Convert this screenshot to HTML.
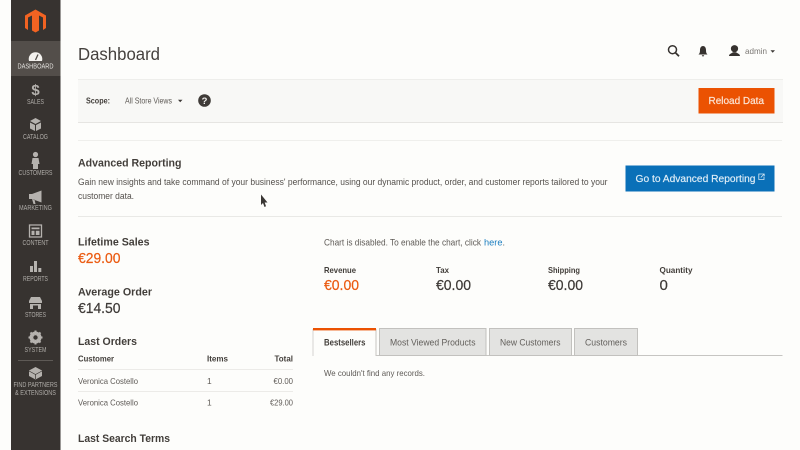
<!DOCTYPE html>
<html><head><meta charset="utf-8"><title>Dashboard</title>
<style>
html,body{margin:0;padding:0;width:800px;height:450px;overflow:hidden;background:#fdfdfb}
svg{display:block;filter:blur(.3px)}
text{font-family:"Liberation Sans",sans-serif;fill:#514d49}
.b{font-weight:bold;fill:#423e3a}
.n{font-size:7.300px;fill:#aeaba7;text-anchor:middle}
.i{fill:#b5b2ae}
.p{fill:#55514d}
.t{fill:#5f5b57}
.k{fill:#3d3936;stroke:#3d3936;stroke-width:.2}
.o{fill:#eb5a10;stroke:#eb5a10;stroke-width:.2}
</style></head><body>
<svg width="800" height="450" viewBox="0 0 800 450" xmlns="http://www.w3.org/2000/svg">
<rect width="800" height="450" fill="#fdfdfb"/>
<!-- sidebar -->
<rect x="11" width="49.500" height="450" fill="#373330"/>
<rect x="11" y="41" width="49.500" height="35" fill="#534e4a"/>
<path d="M35.500 9.500 L46 15.500 V28 L43 30 V17.500 L39 15.500 V30.500 L35.500 32.500 L32 30.500 V15.500 L28 17.500 V30 L25 28 V15.500 Z" fill="#f26322"/>
<!-- dashboard icon -->
<path d="M29 61 a6.800 6.800 0 1 1 13 0 Z" fill="#f4f2ef"/><path d="M35.500 60 L38 54.500" stroke="#534e4a" stroke-width="1.300"/>
<text class="n" x="35.500" y="68.500" style="fill:#e6e4e1" textLength="36" lengthAdjust="spacingAndGlyphs">DASHBOARD</text>
<text x="35.500" y="95" text-anchor="middle" font-size="15" font-weight="bold" style="fill:#b5b2ae">$</text>
<text class="n" x="35.500" y="104" textLength="17" lengthAdjust="spacingAndGlyphs">SALES</text>
<path d="M35.500 118 L41 121 L35.500 124 L30 121 Z M30 122.500 L35 125 V131 L30 128.500 Z M41 122.500 L36 125 V131 L41 128.500 Z" class="i"/>
<text class="n" x="35.500" y="139" textLength="25" lengthAdjust="spacingAndGlyphs">CATALOG</text>
<circle cx="35.500" cy="154.500" r="2.600" class="i"/><path d="M32.500 158 H38.500 L39.500 164 H38 V169 H33 V164 H31.500 Z" class="i"/>
<text class="n" x="35.500" y="175" textLength="34" lengthAdjust="spacingAndGlyphs">CUSTOMERS</text>
<path d="M29 194 H32 L41.500 190.500 V202.500 L32 199 H29 Z M32 199 L33.500 204 H35.500 L34.500 199.500 Z" class="i"/>
<text class="n" x="35.500" y="210" textLength="33" lengthAdjust="spacingAndGlyphs">MARKETING</text>
<path d="M29.500 225 H41.500 V237 H29.500 Z" fill="none" stroke="#b5b2ae" stroke-width="1.300"/><path d="M31.500 227.500 H39.500 V229.300 H31.500 Z M31.500 230.800 H34.500 V235 H31.500 Z M35.800 230.800 H39.500 V235 H35.800 Z" class="i"/>
<text class="n" x="35.500" y="245" textLength="26" lengthAdjust="spacingAndGlyphs">CONTENT</text>
<path d="M30 266 H33 V272 H30 Z M34 261 H37 V272 H34 Z M38.300 268 H41.300 V272 H38.300 Z" class="i"/>
<text class="n" x="35.500" y="281" textLength="25" lengthAdjust="spacingAndGlyphs">REPORTS</text>
<path d="M29 301 L31 297 H40 L42 301 V303 H29 Z M30 304 H41 V309 H38 V305.500 H33 V309 H30 Z" class="i"/>
<text class="n" x="35.500" y="317" textLength="21" lengthAdjust="spacingAndGlyphs">STORES</text>
<circle cx="35.500" cy="337.500" r="4.500" fill="none" stroke="#b5b2ae" stroke-width="3"/><path d="M35.500 330.500 V344.500 M28.500 337.500 H42.500 M30.500 332.500 L40.500 342.500 M40.500 332.500 L30.500 342.500" stroke="#b5b2ae" stroke-width="2"/><circle cx="35.500" cy="337.500" r="2.200" fill="#373330"/>
<text class="n" x="35.500" y="352" textLength="22" lengthAdjust="spacingAndGlyphs">SYSTEM</text>
<rect x="18" y="360" width="35" height="1" fill="#5e5a56"/>
<path d="M35.500 367 L42 370.500 V376 L35.500 379.500 L29 376 V370.500 Z" class="i"/><path d="M29 371 L35.500 374.500 L42 371 M35.500 374.500 V379" stroke="#373330" stroke-width=".7" fill="none"/>
<text class="n" x="35.500" y="387" textLength="44" lengthAdjust="spacingAndGlyphs">FIND PARTNERS</text>
<text class="n" x="35.500" y="395" textLength="41" lengthAdjust="spacingAndGlyphs">&amp; EXTENSIONS</text>

<!-- header -->
<text x="78" y="60" font-size="17.500" style="fill:#45413e" textLength="82" lengthAdjust="spacingAndGlyphs">Dashboard</text>
<circle cx="672.500" cy="49.700" r="4" fill="none" stroke="#36322f" stroke-width="1.500"/><path d="M675.500 52.800 L679 56.300" stroke="#36322f" stroke-width="1.800"/>
<path d="M698.500 54.500 c1.300 -1 1.500 -2.500 1.500 -4.500 c0 -2.400 1.300 -4 3 -4 s3 1.600 3 4 c0 2 .2 3.500 1.500 4.500 Z M701.800 55.300 h2.400 a1.200 1.200 0 0 1 -2.400 0 Z" fill="#36322f"/>
<circle cx="734.500" cy="48.700" r="3.600" fill="#36322f"/><path d="M729 56 c0 -2.300 2.700 -2.700 4 -3.800 h3 c1.300 1.100 4 1.500 4 3.800 Z" fill="#36322f"/>
<text x="745" y="54" font-size="8.200" style="fill:#7b7874" textLength="22" lengthAdjust="spacingAndGlyphs">admin</text>
<path d="M770.500 50.300 H775 L772.700 52.800 Z" fill="#3c3835"/>

<!-- scope bar -->
<rect x="78" y="79" width="705" height="44" fill="#f8f8f6"/>
<rect x="78" y="79" width="705" height="1" fill="#eeeeeb"/>
<rect x="78" y="122" width="705" height="1" fill="#e6e5e2"/>
<text x="86" y="103.500" font-size="8.200" class="b" textLength="24" lengthAdjust="spacingAndGlyphs">Scope:</text>
<text x="125" y="103.500" font-size="8.200" class="t" textLength="47" lengthAdjust="spacingAndGlyphs">All Store Views</text>
<path d="M178 99.800 H182.500 L180.200 102.300 Z" fill="#3c3835"/>
<circle cx="204.500" cy="100.500" r="6.300" fill="#3f3b38"/>
<text x="204.500" y="104" font-size="9.500" font-weight="bold" text-anchor="middle" style="fill:#f5f4f2">?</text>
<rect x="698.500" y="88" width="76" height="25.500" fill="#eb5202"/>
<text x="708.500" y="104" font-size="10" style="fill:#fbe4d4;stroke:#fbe4d4;stroke-width:.2" textLength="55.500" lengthAdjust="spacingAndGlyphs">Reload Data</text>

<!-- advanced reporting -->
<rect x="78" y="140" width="704" height="1" fill="#efefec"/>
<text x="78" y="166.500" font-size="11.300" class="b" textLength="103.500" lengthAdjust="spacingAndGlyphs">Advanced Reporting</text>
<text x="78" y="185" font-size="8.900" class="p" textLength="529.500" lengthAdjust="spacingAndGlyphs">Gain new insights and take command of your business' performance, using our dynamic product, order, and customer reports tailored to your</text>
<text x="78" y="199" font-size="8.900" class="p" textLength="56" lengthAdjust="spacingAndGlyphs">customer data.</text>
<rect x="625.500" y="165.500" width="149" height="26" fill="#0a70b8"/>
<text x="635.500" y="182" font-size="10" style="fill:#e0eef7;stroke:#e0eef7;stroke-width:.15" textLength="120" lengthAdjust="spacingAndGlyphs">Go to Advanced Reporting</text>
<path d="M762 174 H758.800 V179.500 H764 V176.500 M760.800 177.500 L764.200 174 M762 174 H764.200 V176" fill="none" stroke="#d8e9f4" stroke-width=".8"/>
<rect x="78" y="216" width="704" height="1" fill="#e9e9e6"/>
<!-- cursor -->
<path d="M261 194.500 V205 L263 203 L264.500 207 L266 206.300 L264.700 202.500 H267.500 Z" fill="#3a3734"/>

<!-- left stats -->
<text x="78" y="245.500" font-size="10.800" class="b" textLength="71.500" lengthAdjust="spacingAndGlyphs">Lifetime Sales</text>
<text x="78" y="263" font-size="15" class="o" textLength="42.500" lengthAdjust="spacingAndGlyphs">€29.00</text>
<text x="78" y="295.500" font-size="10.800" class="b" textLength="74" lengthAdjust="spacingAndGlyphs">Average Order</text>
<text x="78" y="313" font-size="15" class="k" textLength="42.500" lengthAdjust="spacingAndGlyphs">€14.50</text>

<text x="78" y="345" font-size="11.300" class="b" textLength="59" lengthAdjust="spacingAndGlyphs">Last Orders</text>
<text x="78" y="361.500" font-size="8.200" class="b" textLength="36" lengthAdjust="spacingAndGlyphs">Customer</text>
<text x="207" y="361.500" font-size="8.200" class="b" textLength="21" lengthAdjust="spacingAndGlyphs">Items</text>
<text x="274.500" y="361.500" font-size="8.200" class="b" textLength="18.500" lengthAdjust="spacingAndGlyphs">Total</text>
<rect x="78" y="369" width="215" height="1" fill="#ecebe8"/>
<text x="78" y="384" font-size="8.400" class="t" textLength="60" lengthAdjust="spacingAndGlyphs">Veronica Costello</text>
<text x="207" y="384" font-size="8.400" class="t">1</text>
<text x="273.500" y="384" font-size="8.400" class="t" textLength="19.500" lengthAdjust="spacingAndGlyphs">€0.00</text>
<rect x="78" y="391" width="215" height="1" fill="#ecebe8"/>
<text x="78" y="405.500" font-size="8.400" class="t" textLength="60" lengthAdjust="spacingAndGlyphs">Veronica Costello</text>
<text x="207" y="405.500" font-size="8.400" class="t">1</text>
<text x="270" y="405.500" font-size="8.400" class="t" textLength="23" lengthAdjust="spacingAndGlyphs">€29.00</text>
<text x="78" y="442" font-size="11.300" class="b" textLength="92" lengthAdjust="spacingAndGlyphs">Last Search Terms</text>

<!-- right stats -->
<text x="324" y="245.500" font-size="8.900" class="t" textLength="157" lengthAdjust="spacingAndGlyphs">Chart is disabled. To enable the chart, click</text>
<text x="484" y="245.500" font-size="8.900" style="fill:#1d7fc1" textLength="18.500" lengthAdjust="spacingAndGlyphs">here</text>
<text x="502.500" y="245.500" font-size="8.900" class="t">.</text>
<text x="324" y="273" font-size="8.200" class="b" textLength="32" lengthAdjust="spacingAndGlyphs">Revenue</text>
<text x="436" y="273" font-size="8.200" class="b" textLength="13" lengthAdjust="spacingAndGlyphs">Tax</text>
<text x="548" y="273" font-size="8.200" class="b" textLength="32" lengthAdjust="spacingAndGlyphs">Shipping</text>
<text x="659.500" y="273" font-size="8.200" class="b" textLength="33" lengthAdjust="spacingAndGlyphs">Quantity</text>
<text x="324" y="290" font-size="15" class="o" textLength="35" lengthAdjust="spacingAndGlyphs">€0.00</text>
<text x="436" y="290" font-size="15" class="k" textLength="35" lengthAdjust="spacingAndGlyphs">€0.00</text>
<text x="548" y="290" font-size="15" class="k" textLength="35" lengthAdjust="spacingAndGlyphs">€0.00</text>
<text x="659.500" y="290" font-size="15" class="k">0</text>

<!-- tabs -->
<rect x="312.500" y="355" width="470" height="1" fill="#c6c5c2"/>
<rect x="312.500" y="330" width="63.500" height="26" fill="#fdfdfb"/>
<rect x="312.500" y="329" width="1" height="27" fill="#d5d4d1"/>
<rect x="375.500" y="329" width="1" height="27" fill="#c6c5c2"/>
<rect x="313" y="328" width="63" height="2.400" fill="#eb5202"/>
<text x="324" y="345.500" font-size="8.900" class="b" textLength="41.500" lengthAdjust="spacingAndGlyphs">Bestsellers</text>
<rect x="379.500" y="328.500" width="106.500" height="27" fill="#e3e3e1" stroke="#c2c1be"/>
<text x="390" y="345.500" font-size="8.900" style="fill:#625f5b" textLength="85.500" lengthAdjust="spacingAndGlyphs">Most Viewed Products</text>
<rect x="489.500" y="328.500" width="82" height="27" fill="#e3e3e1" stroke="#c2c1be"/>
<text x="500" y="345.500" font-size="8.900" style="fill:#625f5b" textLength="60.500" lengthAdjust="spacingAndGlyphs">New Customers</text>
<rect x="574.500" y="328.500" width="63" height="27" fill="#e3e3e1" stroke="#c2c1be"/>
<text x="585" y="345.500" font-size="8.900" style="fill:#625f5b" textLength="42" lengthAdjust="spacingAndGlyphs">Customers</text>
<text x="324" y="376" font-size="8.400" class="t" textLength="101" lengthAdjust="spacingAndGlyphs">We couldn't find any records.</text>
</svg>
</body></html>
